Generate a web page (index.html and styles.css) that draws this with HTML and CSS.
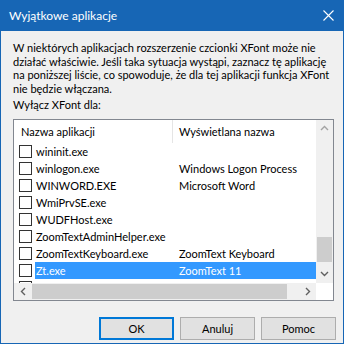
FILE: index.html
```html
<!DOCTYPE html>
<html lang="pl">
<head>
<meta charset="UTF-8">
<title>Wyjątkowe aplikacje</title>
<link rel="stylesheet" href="styles.css">
</head>
<body>
<div class="window">
	<div class="titlebar">
		<span class="title">Wyjątkowe aplikacje</span>
		<svg class="close" width="11" height="11" viewBox="0 0 11 11"><path d="M0.5 0.5L10.5 10.5M10.5 0.5L0.5 10.5" stroke="#fff" stroke-width="1.1"/></svg>
	</div>
	<div class="content">
		<p class="intro">W niektórych aplikacjach rozszerzenie czcionki XFont może nie<br>działać właściwie. Jeśli taka sytuacja wystąpi, zaznacz tę aplikację<br>na poniższej liście, co spowoduje, że dla tej aplikacji funkcja XFont<br>nie będzie włączana.</p>
		<p class="label">Wyłącz XFont dla:</p>
		<div class="listbox">
			<div class="list-main">
				<div class="list-view">
					<div class="header">
						<div class="col1">Nazwa aplikacji</div>
						<div class="col2">Wyświetlana nazwa</div>
					</div>
					<div class="rows">
						<div class="row"><span class="chk"></span><span class="cells"><span class="name">wininit.exe</span><span class="disp"></span></span></div>
						<div class="row"><span class="chk"></span><span class="cells"><span class="name">winlogon.exe</span><span class="disp">Windows Logon Process</span></span></div>
						<div class="row"><span class="chk"></span><span class="cells"><span class="name">WINWORD.EXE</span><span class="disp">Microsoft Word</span></span></div>
						<div class="row"><span class="chk"></span><span class="cells"><span class="name">WmiPrvSE.exe</span><span class="disp"></span></span></div>
						<div class="row"><span class="chk"></span><span class="cells"><span class="name">WUDFHost.exe</span><span class="disp"></span></span></div>
						<div class="row"><span class="chk"></span><span class="cells"><span class="name">ZoomTextAdminHelper.exe</span><span class="disp"></span></span></div>
						<div class="row"><span class="chk"></span><span class="cells"><span class="name">ZoomTextKeyboard.exe</span><span class="disp">ZoomText Keyboard</span></span></div>
						<div class="row selected"><span class="chk"></span><span class="cells"><span class="name">Zt.exe</span><span class="disp">ZoomText 11</span></span></div>
						<div class="row"><span class="chk"></span><span class="cells"><span class="name"></span><span class="disp"></span></span></div>
					</div>
				</div>
				<div class="vscroll">
					<div class="arrow"><svg width="9" height="6" viewBox="0 0 9 6"><path d="M1 5L4.5 1.5L8 5" fill="none" stroke="#a3a3a3" stroke-width="1.4"/></svg></div>
					<div class="vtrack"><div class="vthumb"></div></div>
					<div class="arrow"><svg width="9" height="6" viewBox="0 0 9 6"><path d="M1 1L4.5 4.5L8 1" fill="none" stroke="#606060" stroke-width="1.4"/></svg></div>
				</div>
			</div>
			<div class="hscroll-row">
				<div class="hscroll">
					<div class="arrow"><svg width="6" height="9" viewBox="0 0 6 9"><path d="M5 1L1.5 4.5L5 8" fill="none" stroke="#606060" stroke-width="1.4"/></svg></div>
					<div class="htrack"><div class="hthumb"></div></div>
					<div class="arrow"><svg width="6" height="9" viewBox="0 0 6 9"><path d="M1 1L4.5 4.5L1 8" fill="none" stroke="#606060" stroke-width="1.4"/></svg></div>
				</div>
				<div class="corner"></div>
			</div>
		</div>
		<div class="buttons">
			<button class="btn default">OK</button>
			<button class="btn">Anuluj</button>
			<button class="btn">Pomoc</button>
		</div>
	</div>
</div>
</body>
</html>
```
FILE: styles.css
```css
body {
	margin: 0;
	padding: 0;
	font-family: Lato, "Liberation Sans", sans-serif;
	font-size: 11px;
	color: #000;
}
.window {
	width: 344px;
	height: 344px;
	box-sizing: border-box;
	border: 1px solid #1766b5;
	border-top: 0;
	background: #f0f0f0;
	display: flex;
	flex-direction: column;
	overflow: hidden;
}
.titlebar {
	height: 31px;
	flex: none;
	margin: 0 -1px;
	background: #1766b5;
	color: #fff;
	display: flex;
	align-items: center;
	justify-content: space-between;
	padding: 0 10px 0 9px;
}
.title {
	font-size: 12px;
}
.close {
	display: block;
}
.content {
	padding: 10px 0 0 12px;
	display: flex;
	flex-direction: column;
}
.intro, .label {
	margin: 0;
	line-height: 13.5px;
	white-space: nowrap;
}
.label {
	margin-top: 3px;
	margin-bottom: 7px;
}
.listbox {
	width: 321px;
	height: 182px;
	flex: none;
	box-sizing: border-box;
	border: 1px solid #828790;
	background: #fff;
	display: flex;
	flex-direction: column;
}
.list-main {
	height: 163px;
	display: flex;
}
.list-view {
	flex: 1;
	overflow: hidden;
}
.header {
	height: 23px;
	display: flex;
	align-items: center;
}
.header .col1 {
	width: 151px;
	padding-left: 7px;
	border-right: 1px solid #e5e5e5;
	height: 23px;
	line-height: 23px;
}
.header .col2 {
	padding-left: 6px;
}
.row {
	height: 17px;
	display: flex;
	align-items: center;
	white-space: nowrap;
}
.chk {
	width: 11px;
	height: 11px;
	border: 1px solid #333;
	margin-left: 5px;
	margin-right: 3px;
	background: #fff;
	flex: none;
}
.cells {
	flex: 1;
	display: flex;
	height: 17px;
	line-height: 17px;
}
.name {
	width: 143px;
	padding-left: 1px;
}
.selected .cells {
	background: #3399ff;
	color: #fff;
}
.vscroll {
	width: 17px;
	background: #f0f0f0;
	display: flex;
	flex-direction: column;
}
.arrow {
	width: 17px;
	height: 17px;
	display: flex;
	align-items: center;
	justify-content: center;
	flex: none;
}
.vtrack {
	flex: 1;
	display: flex;
	flex-direction: column;
	justify-content: flex-end;
}
.vthumb {
	height: 25px;
	margin: 0 1px 4px;
	background: #cdcdcd;
}
.hscroll-row {
	height: 17px;
	display: flex;
}
.hscroll {
	flex: 1;
	display: flex;
	background: #f0f0f0;
}
.htrack {
	flex: 1;
	display: flex;
	padding: 1px 12px 1px 1px;
}
.hthumb {
	flex: 1;
	background: #cdcdcd;
}
.corner {
	width: 17px;
	background: #fff;
}
.buttons {
	display: flex;
	justify-content: flex-end;
	gap: 6px;
	margin-top: 16px;
	padding-right: 7px;
}
.btn {
	width: 75px;
	height: 23px;
	box-sizing: border-box;
	border: 1px solid #adadad;
	background: #e1e1e1;
	font-family: Lato, "Liberation Sans", sans-serif;
	font-size: 11px;
	color: #000;
	padding: 0;
}
.btn.default {
	border-color: #0078d7;
	box-shadow: inset 0 0 0 1px #0078d7;
}
```
